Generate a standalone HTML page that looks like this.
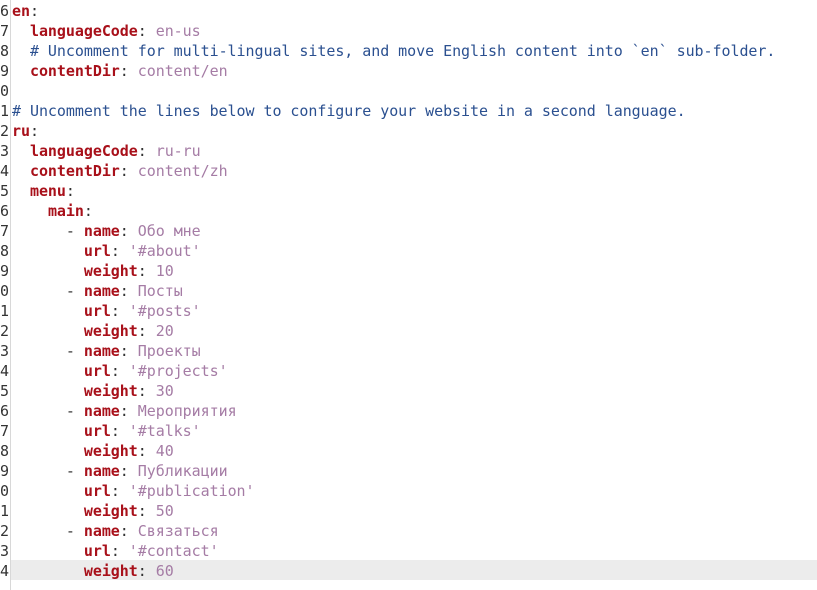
<!DOCTYPE html>
<html><head><meta charset="utf-8"><style>
html,body{margin:0;padding:0;width:817px;height:590px;overflow:hidden;background:#fff;}
.wrap{position:relative;width:817px;height:590px;font-family:"DejaVu Sans Mono","Liberation Mono",monospace;font-size:15px;letter-spacing:-0.05px;}
.gut{position:absolute;left:0;top:0;width:10px;height:590px;border-right:1px solid #d8d8d8;background:#fff;}
.ln{position:absolute;right:1px;height:20px;line-height:20px;color:#333;text-align:right;white-space:nowrap;margin-top:1px;}
.row{position:absolute;left:12px;height:20px;line-height:20px;white-space:pre;color:#333;margin-top:1px;}
.hl{position:absolute;left:11px;right:0;height:20px;background:#ececec;}
.k{color:#a8101a;font-weight:bold;}
.v{color:#a57ca5;}
.c{color:#2b5090;}
</style></head><body><div class="wrap">
<div class="hl" style="top:560px"></div>
<div class="gut">
<div class="ln" style="top:0">6</div><div class="ln" style="top:20px">7</div><div class="ln" style="top:40px">8</div><div class="ln" style="top:60px">9</div><div class="ln" style="top:80px">0</div><div class="ln" style="top:100px">1</div><div class="ln" style="top:120px">2</div><div class="ln" style="top:140px">3</div><div class="ln" style="top:160px">4</div><div class="ln" style="top:180px">5</div><div class="ln" style="top:200px">6</div><div class="ln" style="top:220px">7</div><div class="ln" style="top:240px">8</div><div class="ln" style="top:260px">9</div><div class="ln" style="top:280px">0</div><div class="ln" style="top:300px">1</div><div class="ln" style="top:320px">2</div><div class="ln" style="top:340px">3</div><div class="ln" style="top:360px">4</div><div class="ln" style="top:380px">5</div><div class="ln" style="top:400px">6</div><div class="ln" style="top:420px">7</div><div class="ln" style="top:440px">8</div><div class="ln" style="top:460px">9</div><div class="ln" style="top:480px">0</div><div class="ln" style="top:500px">1</div><div class="ln" style="top:520px">2</div><div class="ln" style="top:540px">3</div><div class="ln" style="top:560px">4</div>
</div>
<div class="row" style="top:0"><span class="k">en</span>:</div>
<div class="row" style="top:20px">  <span class="k">languageCode</span>: <span class="v">en-us</span></div>
<div class="row" style="top:40px">  <span class="c"># Uncomment for multi-lingual sites, and move English content into `en` sub-folder.</span></div>
<div class="row" style="top:60px">  <span class="k">contentDir</span>: <span class="v">content/en</span></div>
<div class="row" style="top:100px"><span class="c"># Uncomment the lines below to configure your website in a second language.</span></div>
<div class="row" style="top:120px"><span class="k">ru</span>:</div>
<div class="row" style="top:140px">  <span class="k">languageCode</span>: <span class="v">ru-ru</span></div>
<div class="row" style="top:160px">  <span class="k">contentDir</span>: <span class="v">content/zh</span></div>
<div class="row" style="top:180px">  <span class="k">menu</span>:</div>
<div class="row" style="top:200px">    <span class="k">main</span>:</div>
<div class="row" style="top:220px">      - <span class="k">name</span>: <span class="v">Обо мне</span></div>
<div class="row" style="top:240px">        <span class="k">url</span>: <span class="v">'#about'</span></div>
<div class="row" style="top:260px">        <span class="k">weight</span>: <span class="v">10</span></div>
<div class="row" style="top:280px">      - <span class="k">name</span>: <span class="v">Посты</span></div>
<div class="row" style="top:300px">        <span class="k">url</span>: <span class="v">'#posts'</span></div>
<div class="row" style="top:320px">        <span class="k">weight</span>: <span class="v">20</span></div>
<div class="row" style="top:340px">      - <span class="k">name</span>: <span class="v">Проекты</span></div>
<div class="row" style="top:360px">        <span class="k">url</span>: <span class="v">'#projects'</span></div>
<div class="row" style="top:380px">        <span class="k">weight</span>: <span class="v">30</span></div>
<div class="row" style="top:400px">      - <span class="k">name</span>: <span class="v">Мероприятия</span></div>
<div class="row" style="top:420px">        <span class="k">url</span>: <span class="v">'#talks'</span></div>
<div class="row" style="top:440px">        <span class="k">weight</span>: <span class="v">40</span></div>
<div class="row" style="top:460px">      - <span class="k">name</span>: <span class="v">Публикации</span></div>
<div class="row" style="top:480px">        <span class="k">url</span>: <span class="v">'#publication'</span></div>
<div class="row" style="top:500px">        <span class="k">weight</span>: <span class="v">50</span></div>
<div class="row" style="top:520px">      - <span class="k">name</span>: <span class="v">Связаться</span></div>
<div class="row" style="top:540px">        <span class="k">url</span>: <span class="v">'#contact'</span></div>
<div class="row" style="top:560px">        <span class="k">weight</span>: <span class="v">60</span></div>
</div></body></html>
